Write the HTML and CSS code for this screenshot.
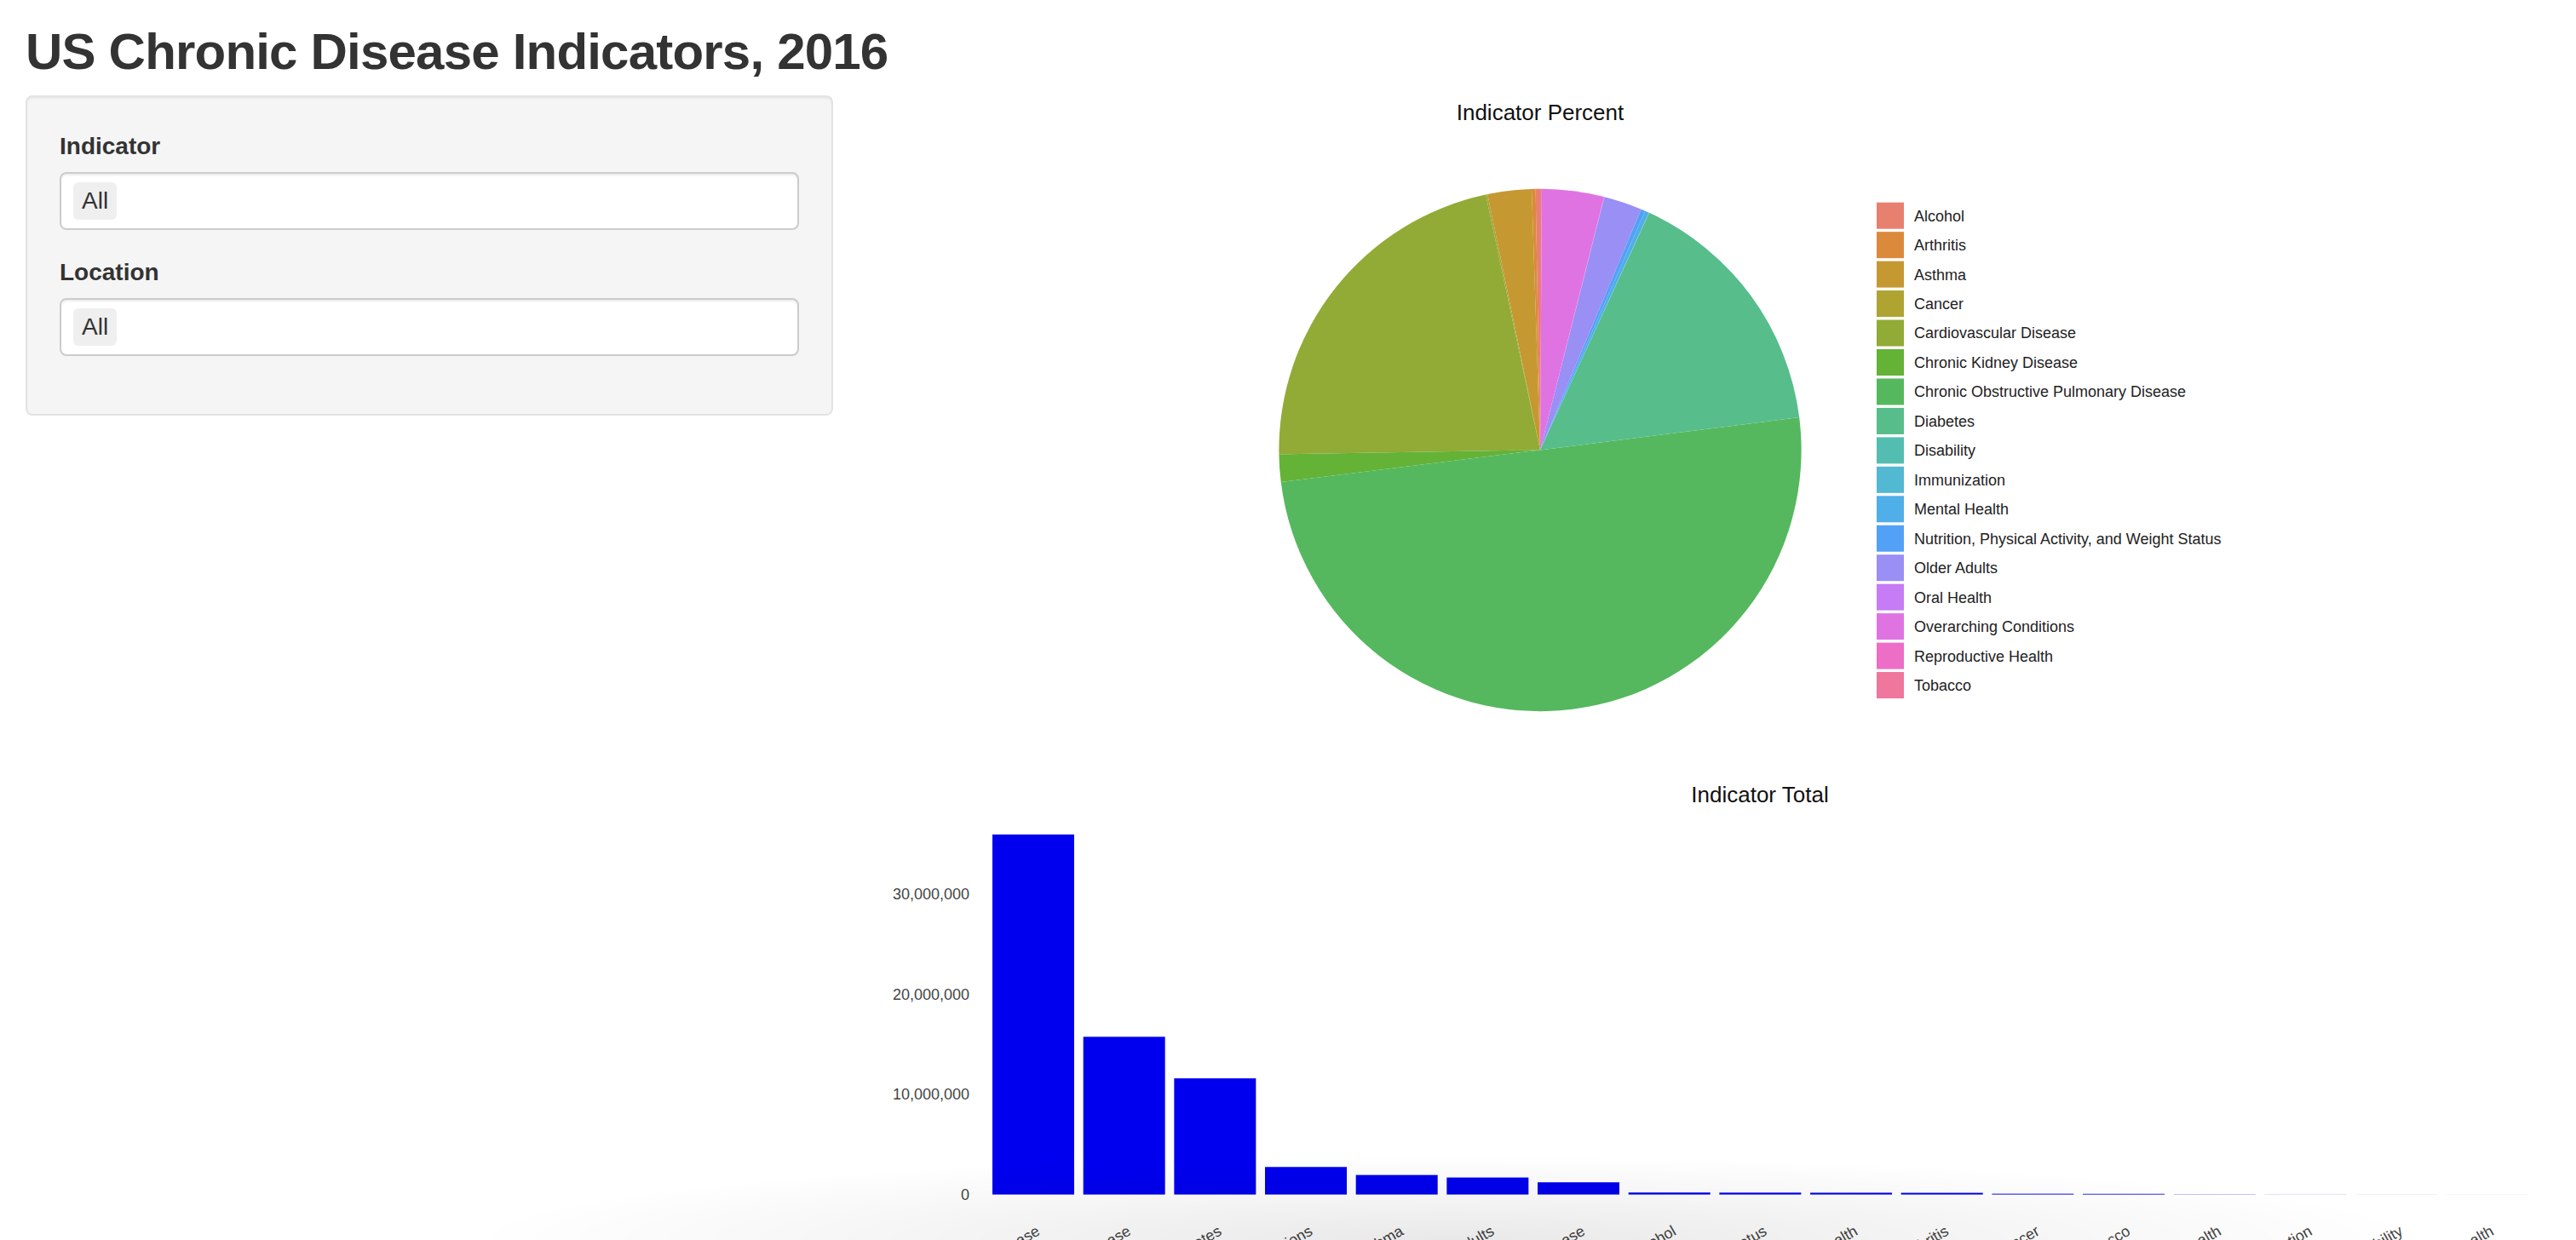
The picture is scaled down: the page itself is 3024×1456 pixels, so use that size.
FILE: index.html
```html
<!DOCTYPE html>
<html lang="en">
<head>
  <meta charset="UTF-8">
  <title>US Chronic Disease Indicators, 2016</title>
  <link rel="stylesheet" href="styles.css">
</head>
<body>
  <div class="container">
    <h2 class="page-title">US Chronic Disease Indicators, 2016</h2>
    <div class="row">
      <div class="sidebar">
        <form class="well">
          <div class="form-group">
            <label>Indicator</label>
            <div class="select-box"><span class="item">All</span></div>
          </div>
          <div class="form-group">
            <label>Location</label>
            <div class="select-box"><span class="item">All</span></div>
          </div>
        </form>
      </div>
      <div class="main">
        <svg class="chart" id="pie" width="1956" height="800"></svg>
        <svg class="chart" id="bar" width="1956" height="800"></svg>
      </div>
    </div>
  </div>
  <div class="fade"></div>

  <script>
    const NS = 'http://www.w3.org/2000/svg';
    const indicators = [
      ['Alcohol', 0.2, '#e8806f'],
      ['Arthritis', 0.17, '#db8a3c'],
      ['Asthma', 1.95, '#c59832'],
      ['Cancer', 0.08, '#afa332'],
      ['Cardiovascular Disease', 15.75, '#91ab36'],
      ['Chronic Kidney Disease', 1.22, '#64b236'],
      ['Chronic Obstructive Pulmonary Disease', 35.95, '#55b85e'],
      ['Diabetes', 11.6, '#57bd8a'],
      ['Disability', 0.005, '#54bdb1'],
      ['Immunization', 0.01, '#53b8d2'],
      ['Mental Health', 0.18, '#50aee8'],
      ['Nutrition, Physical Activity, and Weight Status', 0.19, '#52a1f7'],
      ['Older Adults', 1.7, '#9a8ff5'],
      ['Oral Health', 0.02, '#c57cf5'],
      ['Overarching Conditions', 2.75, '#df73e2'],
      ['Reproductive Health', 0.003, '#ec6ec6'],
      ['Tobacco', 0.07, '#ef769c']
    ];

    function el(parent, tag, attrs, text) {
      const node = document.createElementNS(NS, tag);
      for (const k in attrs) node.setAttribute(k, attrs[k]);
      if (text !== undefined) node.textContent = text;
      parent.appendChild(node);
      return node;
    }

    function drawPie() {
      const svg = document.getElementById('pie');
      const cx = 770, cy = 416.4, r = 306.6;
      const total = indicators.reduce((s, d) => s + d[1], 0);
      let angle = 90;
      el(svg, 'text', { x: 770, y: 29, class: 'chart-title' }, 'Indicator Percent');
      indicators.forEach(([name, value, color], i) => {
        const sweep = value / total * 360;
        const a0 = angle * Math.PI / 180;
        const a1 = (angle + sweep) * Math.PI / 180;
        const x0 = cx + r * Math.cos(a0), y0 = cy - r * Math.sin(a0);
        const x1 = cx + r * Math.cos(a1), y1 = cy - r * Math.sin(a1);
        const large = sweep > 180 ? 1 : 0;
        el(svg, 'path', {
          d: `M${cx},${cy}L${x0.toFixed(2)},${y0.toFixed(2)}A${r},${r} 0 ${large} 0 ${x1.toFixed(2)},${y1.toFixed(2)}Z`,
          fill: color
        });
        angle += sweep;

        const ly = 141.2 + i * 34.46;
        el(svg, 'rect', { x: 1165, y: ly - 15.5, width: 32, height: 31, fill: color });
        el(svg, 'text', { x: 1209, y: ly + 6.4, class: 'legend-text' }, name);
      });
    }

    function drawBar() {
      const svg = document.getElementById('bar');
      const zero = 490.6, scale = 11.76;
      el(svg, 'text', { x: 1028, y: 30, class: 'chart-title' }, 'Indicator Total');
      [0, 10, 20, 30].forEach(v => {
        el(svg, 'text', { x: 100, y: zero - v * scale + 6.4, class: 'tick-y' },
          (v * 1000000).toLocaleString('en-US'));
      });
      const sorted = indicators.slice().sort((a, b) => b[1] - a[1]);
      sorted.forEach(([name, value], i) => {
        const x = 127 + i * 106.67;
        const h = value * scale;
        el(svg, 'rect', { x: x.toFixed(2), y: (zero - h).toFixed(2), width: 96, height: h.toFixed(2), class: 'bar' });
        el(svg, 'text', {
          class: 'tick-x',
          transform: `translate(${(x + 57).toFixed(2)},537) rotate(-30)`
        }, name);
      });
    }

    drawPie();
    drawBar();
  </script>
</body>
</html>
```

FILE: styles.css
```css
body {
  margin: 0;
  font-family: "Liberation Sans", Arial, sans-serif;
  font-size: 28px;
  line-height: 1.42857;
  color: #333;
  background: #fff;
}
.container {
  padding: 0 30px;
}
.page-title {
  font-size: 60px;
  font-weight: bold;
  letter-spacing: -0.8px;
  line-height: 1.1;
  margin: 28px 0 18px;
}
.row {
  display: flex;
  align-items: flex-start;
}
.sidebar {
  width: 948px;
  flex: none;
}
.main {
  flex: 1;
  padding-left: 60px;
}
.well {
  background: #f5f5f5;
  border: 2px solid #e3e3e3;
  border-radius: 8px;
  padding: 38px;
  box-shadow: inset 0 2px 2px rgba(0, 0, 0, 0.05);
}
.form-group {
  margin-bottom: 30px;
}
label {
  display: block;
  font-weight: bold;
  line-height: 40px;
  margin-bottom: 10px;
}
.select-box {
  display: flex;
  background: #fff;
  border: 2px solid #ccc;
  border-radius: 8px;
  padding: 10px 14px 4px;
  box-shadow: inset 0 2px 2px rgba(0, 0, 0, 0.075);
}
.item {
  background: #efefef;
  border-radius: 6px;
  padding: 0 10px;
  margin: 0 6px 6px 0;
  line-height: 44px;
}
.chart {
  display: block;
  font-family: "Liberation Sans", Arial, sans-serif;
}
.chart-title {
  font-size: 26px;
  fill: #111;
  text-anchor: middle;
}
.legend-text {
  font-size: 18px;
  fill: #222;
}
.tick-y {
  font-size: 18px;
  fill: #444;
  text-anchor: end;
}
.tick-x {
  font-size: 18px;
  fill: #444;
  text-anchor: end;
}
.bar {
  fill: #0000ee;
}
.fade {
  position: fixed;
  left: 0;
  right: 0;
  bottom: 0;
  height: 100px;
  pointer-events: none;
  background: radial-gradient(ellipse 1150px 100px at 1700px 100%, rgba(0, 0, 0, 0.085), rgba(0, 0, 0, 0) 100%);
}
```
